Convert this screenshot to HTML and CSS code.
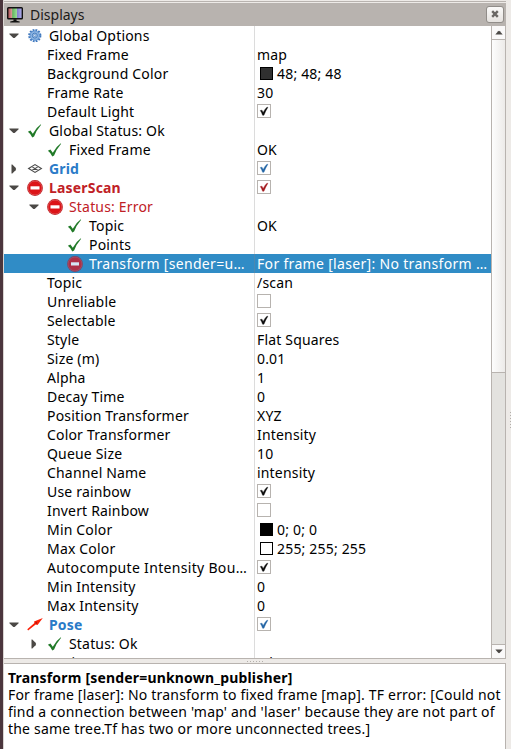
FILE: index.html
```html
<!DOCTYPE html>
<html lang="en">
<head>
<meta charset="utf-8">
<title>Displays</title>
<link rel="stylesheet" href="styles.css">
</head>
<body>
<svg class="defs" width="0" height="0">
  <defs>
    <symbol id="down" viewBox="0 0 10 6"><path d="M.4.5h9.2v.8L6.2 4.6Q5 5.6 3.8 4.6L.4 1.3z" fill="#4b4845"/></symbol>
    <symbol id="right" viewBox="0 0 6 10"><path d="M.5.4v9.2h.8l3.3-3.4Q5.6 5 4.6 3.8L1.3.4z" fill="#4b4845"/></symbol>
    <symbol id="ok" viewBox="0 0 16 16"><path d="M.9 8.7 3.4 7.4 5.8 10.8Q8.6 5 14.1 1L13.8 2.3Q9.3 7.4 7.1 13.6L5.3 14.4Q4 11 .9 8.7z" fill="#217a28"/></symbol>
    <symbol id="error" viewBox="0 0 16 16"><circle cx="8" cy="8" r="7.9" fill="#b51216"/><circle cx="8" cy="8" r="7" fill="#dc1418" stroke="#ef8a8c" stroke-width=".5"/><rect x="3.5" y="6.3" width="9" height="3.2" fill="#fff"/></symbol>
    <symbol id="errorsel" viewBox="0 0 16 16"><circle cx="8" cy="8" r="7.9" fill="#7d3b59"/><circle cx="8" cy="8" r="7" fill="#ad3046" stroke="#a76c87" stroke-width=".5"/><rect x="4" y="6.3" width="8" height="3.2" fill="#d5e7f4"/></symbol>
    <symbol id="gear" viewBox="0 0 16 16"><circle cx="7.8" cy="7.6" r="5.6" fill="none" stroke="#3d76bd" stroke-width="2" stroke-dasharray="1.8 1.132"/><circle cx="7.8" cy="7.6" r="4.7" fill="#8db5e2" stroke="#5a8fce"/><circle cx="7.8" cy="7.6" r="2.5" fill="#a9c8ec" stroke="#3e76b9" stroke-width=".9"/><circle cx="7.8" cy="7.6" r="1" fill="#fff" stroke="#3e76b9" stroke-width=".6"/></symbol>
    <symbol id="grid" viewBox="0 0 16 16"><path d="M1.6 7.5 8 3.6l6.4 3.9L8 11.4zM4.8 5.6l6.4 3.8M11.2 5.6 4.8 9.4" fill="none" stroke="#4a4a4a" stroke-width="1.1"/></symbol>
    <symbol id="pose" viewBox="0 0 16 16"><path d="M.3 12.2 7.4 5.9 7 4.4 15.8.9 10.5 8 8.7 7.6 1.1 13.6z" fill="#fa2108"/><path d="M8 6 9.8 4.4 10 7z" fill="#a5150d"/></symbol>
    <symbol id="tick" viewBox="0 0 12 12"><path d="M2.3 5.5 4 5.2 5.1 7.6Q6.6 4.2 9.2 2L9.8 2.4Q7.5 6 5.9 10.2H4.6Q3.6 7.4 2.3 5.5z" fill="currentColor" stroke="currentColor" stroke-width=".4"/></symbol>
  </defs>
</svg>
<div class="window">
  <div class="edge"></div>
  <main class="dock">
    <header class="title">
      <svg class="monitor" viewBox="0 0 17 17"><defs><linearGradient id="screen"><stop offset="0" stop-color="#a74c50"/><stop offset=".28" stop-color="#d99596"/><stop offset=".34" stop-color="#62b960"/><stop offset=".62" stop-color="#9bda98"/><stop offset=".67" stop-color="#8580cf"/><stop offset="1" stop-color="#b4b3ed"/></linearGradient></defs><rect x=".7" y=".7" width="14.6" height="11" rx=".8" fill="url(#screen)" stroke="#111" stroke-width="1.4"/><path d="M6.5 12.2h3v1.6l3.2.6v1H3.2v-1l3.3-.6z" fill="#111"/></svg>
      <h1>Displays</h1>
      <button class="close" aria-label="Close"><svg viewBox="0 0 8 8"><path d="M1.2 1.2 6.8 6.8M6.8 1.2 1.2 6.8" stroke="#6a6764" stroke-width="2.4"/></svg></button>
    </header>
    <section class="tree">
      <div class="rows">
        <div class="row"><div class="name"><svg class="down"><use href="#down"/></svg><svg class="icon"><use href="#gear"/></svg><span>Global Options</span></div><div class="value"></div></div>
        <div class="row"><div class="name plain"><span>Fixed Frame</span></div><div class="value">map</div></div>
        <div class="row"><div class="name plain"><span>Background Color</span></div><div class="value"><i class="swatch dark"></i>48; 48; 48</div></div>
        <div class="row"><div class="name plain"><span>Frame Rate</span></div><div class="value">30</div></div>
        <div class="row"><div class="name plain"><span>Default Light</span></div><div class="value"><svg class="check"><use href="#tick"/></svg></div></div>
        <div class="row"><div class="name"><svg class="down"><use href="#down"/></svg><svg class="icon"><use href="#ok"/></svg><span>Global Status: Ok</span></div><div class="value"></div></div>
        <div class="row"><div class="name leaf1"><svg class="icon"><use href="#ok"/></svg><span>Fixed Frame</span></div><div class="value">OK</div></div>
        <div class="row"><div class="name display"><svg class="right"><use href="#right"/></svg><svg class="icon"><use href="#grid"/></svg><span>Grid</span></div><div class="value"><svg class="check blue"><use href="#tick"/></svg></div></div>
        <div class="row"><div class="name display failed"><svg class="down"><use href="#down"/></svg><svg class="icon"><use href="#error"/></svg><span>LaserScan</span></div><div class="value"><svg class="check red"><use href="#tick"/></svg></div></div>
        <div class="row"><div class="name level1 failed"><svg class="down"><use href="#down"/></svg><svg class="icon"><use href="#error"/></svg><span>Status: Error</span></div><div class="value"></div></div>
        <div class="row"><div class="name leaf2"><svg class="icon"><use href="#ok"/></svg><span>Topic</span></div><div class="value">OK</div></div>
        <div class="row"><div class="name leaf2"><svg class="icon"><use href="#ok"/></svg><span>Points</span></div><div class="value"></div></div>
        <div class="row selected"><div class="name leaf2"><svg class="icon"><use href="#errorsel"/></svg><span class="cut">Transform [sender=u…</span></div><div class="value cut">For frame [laser]: No transform …</div></div>
        <div class="row"><div class="name plain"><span>Topic</span></div><div class="value">/scan</div></div>
        <div class="row"><div class="name plain"><span>Unreliable</span></div><div class="value"><svg class="check"></svg></div></div>
        <div class="row"><div class="name plain"><span>Selectable</span></div><div class="value"><svg class="check"><use href="#tick"/></svg></div></div>
        <div class="row"><div class="name plain"><span>Style</span></div><div class="value">Flat Squares</div></div>
        <div class="row"><div class="name plain"><span>Size (m)</span></div><div class="value">0.01</div></div>
        <div class="row"><div class="name plain"><span>Alpha</span></div><div class="value">1</div></div>
        <div class="row"><div class="name plain"><span>Decay Time</span></div><div class="value">0</div></div>
        <div class="row"><div class="name plain"><span>Position Transformer</span></div><div class="value">XYZ</div></div>
        <div class="row"><div class="name plain"><span>Color Transformer</span></div><div class="value">Intensity</div></div>
        <div class="row"><div class="name plain"><span>Queue Size</span></div><div class="value">10</div></div>
        <div class="row"><div class="name plain"><span>Channel Name</span></div><div class="value">intensity</div></div>
        <div class="row"><div class="name plain"><span>Use rainbow</span></div><div class="value"><svg class="check"><use href="#tick"/></svg></div></div>
        <div class="row"><div class="name plain"><span>Invert Rainbow</span></div><div class="value"><svg class="check"></svg></div></div>
        <div class="row"><div class="name plain"><span>Min Color</span></div><div class="value"><i class="swatch black"></i>0; 0; 0</div></div>
        <div class="row"><div class="name plain"><span>Max Color</span></div><div class="value"><i class="swatch"></i>255; 255; 255</div></div>
        <div class="row"><div class="name plain"><span class="cut">Autocompute Intensity Bou…</span></div><div class="value"><svg class="check"><use href="#tick"/></svg></div></div>
        <div class="row"><div class="name plain"><span>Min Intensity</span></div><div class="value">0</div></div>
        <div class="row"><div class="name plain"><span>Max Intensity</span></div><div class="value">0</div></div>
        <div class="row"><div class="name display"><svg class="down"><use href="#down"/></svg><svg class="icon"><use href="#pose"/></svg><span>Pose</span></div><div class="value"><svg class="check blue"><use href="#tick"/></svg></div></div>
        <div class="row"><div class="name level1"><svg class="right"><use href="#right"/></svg><svg class="icon"><use href="#ok"/></svg><span>Status: Ok</span></div><div class="value"></div></div>
        <div class="row"><div class="name plain"><span>Topic</span></div><div class="value">/slam_out_pose</div></div>
      </div>
      <div class="scroll">
        <div class="step"><svg viewBox="0 0 8 5"><path d="M.3 4.5h7.4L4.8 1.2Q4 .4 3.2 1.2z" fill="#4b4845"/></svg></div>
        <div class="thumb"></div>
        <div class="track"></div>
        <div class="step"><svg viewBox="0 0 8 5"><path d="M.3.5h7.4L4.8 3.8Q4 4.6 3.2 3.8z" fill="#4b4845"/></svg></div>
      </div>
    </section>
    <div class="splitter"><i></i></div>
    <section class="help">
      <b>Transform [sender=unknown_publisher]</b>
      <p>For frame [laser]: No transform to fixed frame [map]. TF error: [Could not</p>
      <p>find a connection between 'map' and 'laser' because they are not part of</p>
      <p>the same tree.Tf has two or more unconnected trees.]</p>
    </section>
  </main>
  <div class="gutter"><i></i></div>
</div>
</body>
</html>
```
FILE: styles.css
```css
* { box-sizing: border-box; }
body {
  margin: 0;
  width: 511px;
  height: 749px;
  overflow: hidden;
  background: #edeae7;
  color: #000;
  font: 14px/19px "Noto Sans", sans-serif;
  letter-spacing: .18px;
}
.defs { position: absolute; }
.window { display: flex; height: 749px; }
.edge { width: 3px; background: #4b363d; }
.dock { width: 503px; display: flex; flex-direction: column; padding-top: 1px; border-left: 1px solid #d9d5d2; background: #edeae7; }
.title { height: 25px; flex: none; display: flex; align-items: center; padding: 1px 2px 0 3px; border-top: 1px solid #b8b3af; box-shadow: inset 0 1px #edeae7; background: #b8b3af; }
.title h1 { margin: 0 auto 0 6px; font-size: 14px; font-weight: 400; line-height: 23px; letter-spacing: 0; color: #1c1b1a; }
.monitor { width: 17px; height: 17px; margin-top: 2px; }
.close { width: 18px; height: 17px; margin-top: -1px; padding: 0; display: grid; place-items: center; border: 1px solid #918d89; border-radius: 3px; background: linear-gradient(#fbfaf9, #e5e2df); }
.close svg { width: 8px; height: 8px; }
.tree { height: 633px; flex: none; display: flex; overflow: hidden; border-right: 1px solid #b8b3af; border-bottom: 1px solid #b8b3af; background: #fff; }
.rows { width: 487px; flex: none; }
.row { display: flex; height: 19px; white-space: pre; }
.name { width: 251px; flex: none; display: flex; align-items: center; padding-left: 5px; border-right: 1px solid #dcdcdc; }
.name.plain, .name.leaf1 { padding-left: 43px; }
.name.level1 { padding-left: 25px; }
.name.leaf2 { padding-left: 63px; }
.icon { width: 16px; height: 16px; flex: none; margin-right: 6px; }
.down { width: 10px; height: 6px; margin-right: 8px; flex: none; }
.right { width: 6px; height: 10px; margin: 0 10px 0 2px; flex: none; }
.value { display: flex; align-items: center; padding-left: 2px; }
.cut { letter-spacing: .32px; }
.display { color: #2a7bc8; font-weight: 700; }
.failed { color: #c02025; }
.selected { background: #308cc6; color: #fff; }
.selected .name { border-color: #4c88b0; }
.check { width: 14px; height: 14px; margin-bottom: 1px; border: 1px solid #b7b3af; background: #fff; color: #0c0c0c; }
.blue { color: #2365a5; }
.red { color: #a31a1e; }
.swatch { width: 13px; height: 13px; margin: 0 4px 0 3px; border: 1px solid #000; background: #fff; }
.dark { background: #303030; }
.black { background: #000; }
.scroll { width: 15px; flex: none; display: flex; flex-direction: column; border-left: 1px solid #b8b3af; background: #e3e2df; }
.step { height: 14px; flex: none; display: grid; place-items: center; border-bottom: 1px solid #b8b3af; background: #faf9f9; }
.step:last-child { border-top: 1px solid #b8b3af; border-bottom: 0; }
.step svg { width: 8px; height: 5px; }
.thumb { height: 333px; flex: none; border-bottom: 1px solid #b8b3af; background: linear-gradient(90deg, #fdfdfd, #ebe9e7); }
.track { flex: 1; }
.splitter { height: 4px; flex: none; display: grid; place-items: center; }
.splitter i { width: 17px; height: 1px; background: repeating-linear-gradient(90deg, #b3afab 0 1px, transparent 1px 3px); }
.help { flex: 1; padding: 5px 0 0 4px; border: solid #b8b3af; border-width: 1px 1px 0 0; background: #fff; line-height: 17px; white-space: pre; display: flex; flex-direction: column; }
.help p { margin: 0; letter-spacing: .19px; }
.gutter { width: 5px; display: grid; align-items: start; justify-items: end; padding-top: 412px; }
.gutter i { width: 1px; height: 18px; background: repeating-linear-gradient(#b3afab 0 1px, transparent 1px 3px); }
```
